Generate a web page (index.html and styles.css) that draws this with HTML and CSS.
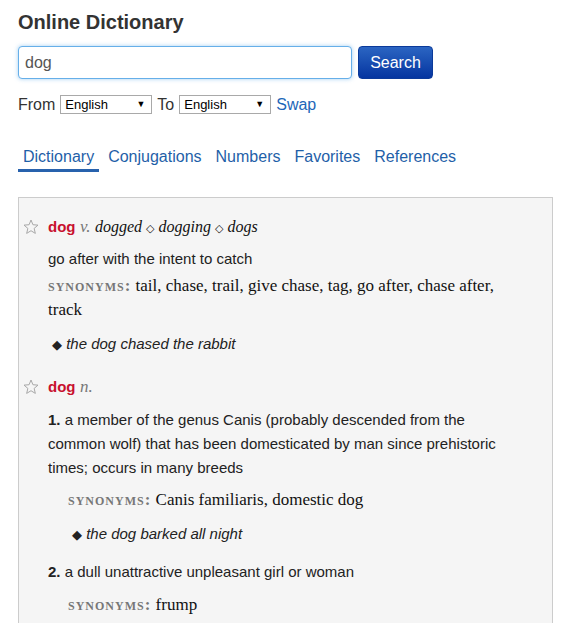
FILE: index.html
```html
<!DOCTYPE html>
<html lang="en">

<head>
    <meta charset="UTF-8">
    <meta name="viewport" content="width=device-width, initial-scale=1.0">
    <title>Online Dictionary</title>
    <link rel="stylesheet" href="styles.css">
</head>

<body>
    <div class="page">
        <h1 class="title">Online Dictionary</h1>

        <form class="search-row">
            <input type="text" class="search-input" value="dog">
            <button type="button" class="search-btn">Search</button>
        </form>

        <div class="lang-row">
            <span>From</span>
            <span class="select-wrap">
                <select class="lang-select">
                    <option>English</option>
                </select>
                <span class="arrow">&#9660;</span>
            </span>
            <span>To</span>
            <span class="select-wrap">
                <select class="lang-select">
                    <option>English</option>
                </select>
                <span class="arrow">&#9660;</span>
            </span>
            <a href="#" class="link">Swap</a>
        </div>

        <nav class="tabs">
            <a href="#" class="tab active">Dictionary</a>
            <a href="#" class="tab">Conjugations</a>
            <a href="#" class="tab">Numbers</a>
            <a href="#" class="tab">Favorites</a>
            <a href="#" class="tab">References</a>
        </nav>

        <div class="results">
            <div class="entry">
                <svg class="star" width="16" height="16" viewBox="0 0 24 24">
                    <polygon points="12,1.5 14.9,8.6 22.5,9.2 16.7,14.1 18.5,21.6 12,17.6 5.5,21.6 7.3,14.1 1.5,9.2 9.1,8.6" fill="none" stroke="#a8a8a8" stroke-width="1.5" stroke-linejoin="round"/>
                </svg>
                <div class="entry-body">
                    <div class="headword">
                        <span class="word">dog</span>
                        <span class="pos">v.</span>
                        <span class="forms">dogged <span class="sep">&#9671;</span> dogging <span class="sep">&#9671;</span> dogs</span>
                    </div>
                    <p class="def">go after with the intent to catch</p>
                    <p class="syn"><span class="syn-label">synonyms:</span> tail, chase, trail, give chase, tag, go after, chase after, track</p>
                    <p class="example"><span class="bullet">&#9670;</span> the dog chased the rabbit</p>
                </div>
            </div>

            <div class="entry">
                <svg class="star" width="16" height="16" viewBox="0 0 24 24">
                    <polygon points="12,1.5 14.9,8.6 22.5,9.2 16.7,14.1 18.5,21.6 12,17.6 5.5,21.6 7.3,14.1 1.5,9.2 9.1,8.6" fill="none" stroke="#a8a8a8" stroke-width="1.5" stroke-linejoin="round"/>
                </svg>
                <div class="entry-body">
                    <div class="headword">
                        <span class="word">dog</span>
                        <span class="pos">n.</span>
                    </div>
                    <p class="def sense"><b>1.</b> a member of the genus Canis (probably descended from the common wolf) that has been domesticated by man since prehistoric times; occurs in many breeds</p>
                    <p class="syn sub"><span class="syn-label">synonyms:</span> Canis familiaris, domestic dog</p>
                    <p class="example sub"><span class="bullet">&#9670;</span> the dog barked all night</p>
                    <p class="def sense next"><b>2.</b> a dull unattractive unpleasant girl or woman</p>
                    <p class="syn sub"><span class="syn-label">synonyms:</span> frump</p>
                </div>
            </div>
        </div>
    </div>
</body>

</html>
```

FILE: styles.css
```css
body {
    margin: 0;
    padding: 0;
    font-family: "Liberation Sans", Arial, sans-serif;
    color: #222;
    background: #fff;
}

.page {
    padding: 10px 8px 0 18px;
}

.title {
    margin: 0;
    font-size: 20px;
    line-height: 24px;
    font-weight: bold;
    color: #333;
}

.search-row {
    display: flex;
    gap: 6px;
    margin: 12px 0 0;
}

.search-input {
    width: 334px;
    height: 33px;
    box-sizing: border-box;
    padding: 0 6px;
    font-family: inherit;
    font-size: 16px;
    color: #555;
    border: 1px solid #66afe9;
    border-radius: 4px;
    box-shadow: 0 0 4px rgba(102, 175, 233, 0.6);
    outline: none;
}

.search-btn {
    width: 75px;
    height: 33px;
    font-family: inherit;
    font-size: 16px;
    color: #fff;
    background: linear-gradient(#2b65c2, #0535a0);
    border: 1px solid #0b3a9a;
    border-radius: 4px;
    cursor: pointer;
}

.lang-row {
    display: flex;
    align-items: center;
    gap: 5px;
    margin-top: 16px;
    height: 19px;
    font-size: 16px;
    color: #333;
}

.select-wrap {
    position: relative;
    display: inline-block;
    height: 19px;
}

.lang-select {
    appearance: none;
    display: block;
    width: 92px;
    height: 19px;
    padding: 0 0 0 4px;
    font-family: inherit;
    font-size: 13px;
    color: #000;
    background: #fff;
    border: 1px solid #a9a9a9;
    border-radius: 0;
}

.arrow {
    position: absolute;
    right: 7px;
    top: 4px;
    font-size: 9px;
    color: #000;
    pointer-events: none;
}

.link {
    color: #2266b8;
    text-decoration: none;
}

.tabs {
    display: flex;
    gap: 4px;
    margin-top: 34px;
}

.tab {
    padding: 0 5px 3px;
    font-size: 16px;
    line-height: 18px;
    color: #1f5fa8;
    text-decoration: none;
    border-bottom: 3px solid transparent;
}

.tab.active {
    border-bottom-color: #2862ad;
}

.results {
    margin-top: 25px;
    width: 535px;
    box-sizing: border-box;
    min-height: 440px;
    padding: 17px 47px 0 4px;
    background: #f5f5f5;
    border: 1px solid #ccc;
    border-bottom: none;
}

.entry {
    display: flex;
    margin-bottom: 18px;
}

.star {
    flex: none;
    width: 16px;
    margin: 4px 9px 0 0;
}

.entry-body {
    flex: 1;
}

.headword {
    font-size: 16px;
    line-height: 24px;
}

.word {
    font-size: 15px;
    font-weight: bold;
    color: #c8102e;
}

.pos {
    font-family: "Liberation Serif", serif;
    font-size: 17px;
    font-style: italic;
    color: #777;
}

.forms {
    font-family: "Liberation Serif", serif;
    font-size: 16px;
    font-style: italic;
    color: #111;
}

.sep {
    font-style: normal;
    font-size: 11px;
    font-family: "DejaVu Sans", sans-serif;
}

.def {
    margin: 6px 0 0;
    font-size: 15px;
    line-height: 24px;
}

.def.sense {
    margin-top: 9px;
}

.def.next {
    margin-top: 13px;
}

.syn {
    margin: 3px 0 0;
    font-family: "Liberation Serif", serif;
    font-size: 17px;
    line-height: 24px;
    color: #111;
}

.syn-label {
    font-variant: small-caps;
    font-weight: bold;
    color: #777;
    letter-spacing: 1px;
}

.example {
    margin: 10px 0 0 4px;
    font-size: 15px;
    line-height: 24px;
    font-style: italic;
}

.bullet {
    font-style: normal;
    font-size: 13px;
    font-family: "DejaVu Sans", sans-serif;
}

.syn.sub {
    margin: 8px 0 0 20px;
}

.example.sub {
    margin: 10px 0 0 24px;
}

.def.next + .syn.sub {
    margin-top: 9px;
}
```
